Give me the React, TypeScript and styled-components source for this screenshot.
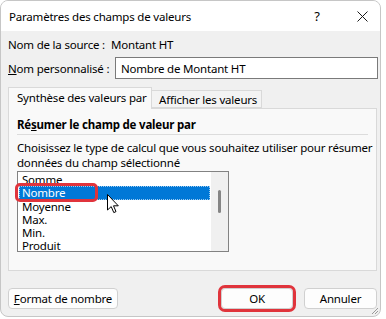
import React from 'react';
import styled, { createGlobalStyle } from 'styled-components';

const GlobalStyle = createGlobalStyle`
    html, body {
        margin: 0;
        padding: 0;
        background: #ffffff;
    }

    body {
        font-family: "Segoe UI", "Noto Sans", "Open Sans", sans-serif;
        font-size: 11.5px;
        letter-spacing: -0.2px;
        color: #000000;
    }
`;

const Window = styled.div`
    position: relative;
    box-sizing: border-box;
    width: 381px;
    height: 317px;
    border: 1px solid #c6c6c6;
    border-radius: 8px;
    background: #f0f0f0;
    overflow: hidden;
    display: flex;
    flex-direction: column;
`;

const TitleBar = styled.div`
    height: 30px;
    background: #ffffff;
    display: flex;
    align-items: center;
    padding: 0 12px 0 8px;
`;

const Title = styled.div`
    flex: 1;
`;

const TitleGlyph = styled.div`
    width: 12px;
    display: flex;
    justify-content: center;
    font-size: 13px;
    margin-left: ${props => props.$gap || 0}px;
`;

const Body = styled.div`
    flex: 1;
    display: flex;
    flex-direction: column;
    padding: 0 3px 0 7px;
`;

const Row = styled.div`
    display: flex;
    align-items: center;
    height: ${props => props.$height}px;
    margin-top: ${props => props.$top}px;
`;

const Label = styled.span`
    width: ${props => props.$width}px;
    flex-shrink: 0;
    white-space: nowrap;
`;

const TextInput = styled.div`
    box-sizing: border-box;
    flex: 1;
    height: 22px;
    border: 1px solid #7a7a7a;
    background: #ffffff;
    padding: 0 5px;
    display: flex;
    align-items: center;
    margin-right: -1px;
`;

const TabStrip = styled.div`
    display: flex;
    align-items: flex-end;
    height: 21px;
    margin-top: 8px;
    position: relative;
    z-index: 1;
`;

const Tab = styled.div`
    box-sizing: border-box;
    width: ${props => props.$width}px;
    height: ${props => (props.$active ? 22 : 18)}px;
    margin-bottom: ${props => (props.$active ? -1 : 0)}px;
    border: 1px solid #d9d9d9;
    border-bottom: ${props => (props.$active ? 'none' : '1px solid #d9d9d9')};
    border-left: ${props => (props.$first ? '1px solid #d9d9d9' : 'none')};
    background: ${props => (props.$active ? '#f9f9f9' : '#f3f3f3')};
    display: flex;
    align-items: center;
    padding-left: ${props => (props.$active ? 8 : 7)}px;
    padding-bottom: ${props => (props.$active ? 2 : 0)}px;
    white-space: nowrap;
`;

const Panel = styled.div`
    box-sizing: border-box;
    width: 369px;
    height: 163px;
    border: 1px solid #d9d9d9;
    background: #f9f9f9;
    padding: 0 8px;
    display: flex;
    flex-direction: column;
`;

const Heading = styled.div`
    margin-top: 8px;
    height: 16px;
    line-height: 16px;
    font-weight: 700;
`;

const Separator = styled.div`
    margin-top: 1px;
    height: 1px;
    background: #dcdcdc;
`;

const Description = styled.div`
    margin-top: 5px;
    line-height: 15px;
    white-space: nowrap;
`;

const ListWrap = styled.div`
    position: relative;
    margin-top: 1px;
    width: 212px;
    height: 81px;
`;

const ListBox = styled.div`
    box-sizing: border-box;
    width: 100%;
    height: 100%;
    border: 1px solid #828282;
    background: #ffffff;
    display: flex;
    overflow: hidden;
`;

const Items = styled.div`
    flex: 1;
    padding: 1px 1px 0;
    display: flex;
    flex-direction: column;
`;

const Item = styled.div`
    flex-shrink: 0;
    height: 13.3px;
    line-height: 13.3px;
    padding-left: 3px;
    background: ${props => (props.$selected ? '#0078d7' : 'transparent')};
    color: ${props => (props.$selected ? '#ffffff' : '#000000')};
    outline: ${props => (props.$selected ? '1px dotted #9ccaf0' : 'none')};
    outline-offset: -1px;
`;

const ScrollTrack = styled.div`
    width: 17px;
    background: #f0f0f0;
    display: flex;
    justify-content: center;
    padding-top: 18px;
`;

const ScrollThumb = styled.div`
    width: 3px;
    height: 23px;
    border-radius: 2px;
    background: #858585;
`;

const Highlight = styled.div`
    position: absolute;
    left: -2px;
    top: 12px;
    width: 83px;
    height: 19px;
    box-sizing: border-box;
    border: 3px solid #e0343c;
    border-radius: 5px;
    pointer-events: none;
`;

const Cursor = styled.svg`
    position: absolute;
    left: 90px;
    top: 23px;
`;

const ButtonRow = styled.div`
    display: flex;
    align-items: center;
    margin-top: 17px;
    height: 21px;
    width: 369px;
`;

const Button = styled.div`
    box-sizing: border-box;
    width: ${props => props.$width}px;
    height: 21px;
    margin-left: ${props => props.$left || 0}px;
    border: 1px solid #d0d0d0;
    border-radius: 4px;
    background: #fdfdfd;
    display: flex;
    align-items: center;
    justify-content: center;
    outline: ${props => (props.$marked ? '3px solid #e0343c' : 'none')};
    outline-offset: 0;
`;

const Grip = styled.svg`
    position: absolute;
    right: 1px;
    bottom: 1px;
`;

const items = ['Somme', 'Nombre', 'Moyenne', 'Max.', 'Min.', 'Produit'];

const App = () => {
    return (
        <React.Fragment>
            <GlobalStyle />
            <Window>
                <TitleBar>
                    <Title>Paramètres des champs de valeurs</Title>
                    <TitleGlyph>?</TitleGlyph>
                    <TitleGlyph $gap={33}>
                        <svg width="11" height="11" viewBox="0 0 11 11">
                            <path d="M0.5 0.5 L10.5 10.5 M10.5 0.5 L0.5 10.5" stroke="#1a1a1a" strokeWidth="1" />
                        </svg>
                    </TitleGlyph>
                </TitleBar>
                <Body>
                    <Row $height={16} $top={5}>
                        <Label $width={103}>Nom de la source :</Label>
                        <span>Montant HT</span>
                    </Row>
                    <Row $height={22} $top={5}>
                        <Label $width={107}><u>N</u>om personnalisé :</Label>
                        <TextInput>Nombre de Montant HT</TextInput>
                    </Row>
                    <TabStrip>
                        <Tab $active $first $width={144}>Synthèse des valeurs par</Tab>
                        <Tab $width={110}>Afficher les valeurs</Tab>
                    </TabStrip>
                    <Panel>
                        <Heading>Ré<u>s</u>umer le champ de valeur par</Heading>
                        <Separator />
                        <Description>
                            Choisissez le type de calcul que vous souhaitez utiliser pour résumer
                            <br />
                            données du champ sélectionné
                        </Description>
                        <ListWrap>
                            <ListBox>
                                <Items>
                                    {items.map(item => (
                                        <Item key={`calc-${item}`} $selected={item === 'Nombre'}>{item}</Item>
                                    ))}
                                </Items>
                                <ScrollTrack>
                                    <ScrollThumb />
                                </ScrollTrack>
                            </ListBox>
                            <Highlight />
                            <Cursor width="13" height="20" viewBox="0 0 13 20">
                                <path d="M0.5 0.5 L0.5 16 L4.2 12.6 L6.8 18.6 L9 17.6 L6.5 11.8 L11.3 11.8 Z" fill="#ffffff" stroke="#000000" strokeWidth="1" strokeLinejoin="round" />
                            </Cursor>
                        </ListWrap>
                    </Panel>
                    <ButtonRow>
                        <Button $width={110}><u>F</u>ormat de nombre</Button>
                        <Button $width={72} $left={103} $marked>OK</Button>
                        <Button $width={73} $left={11}>Annuler</Button>
                    </ButtonRow>
                </Body>
                <Grip width="9" height="9" viewBox="0 0 9 9">
                    <path d="M8 2 L2 8 M8 5 L5 8" stroke="#9a9a9a" strokeWidth="1" />
                </Grip>
            </Window>
        </React.Fragment>
    );
};

export default App;
